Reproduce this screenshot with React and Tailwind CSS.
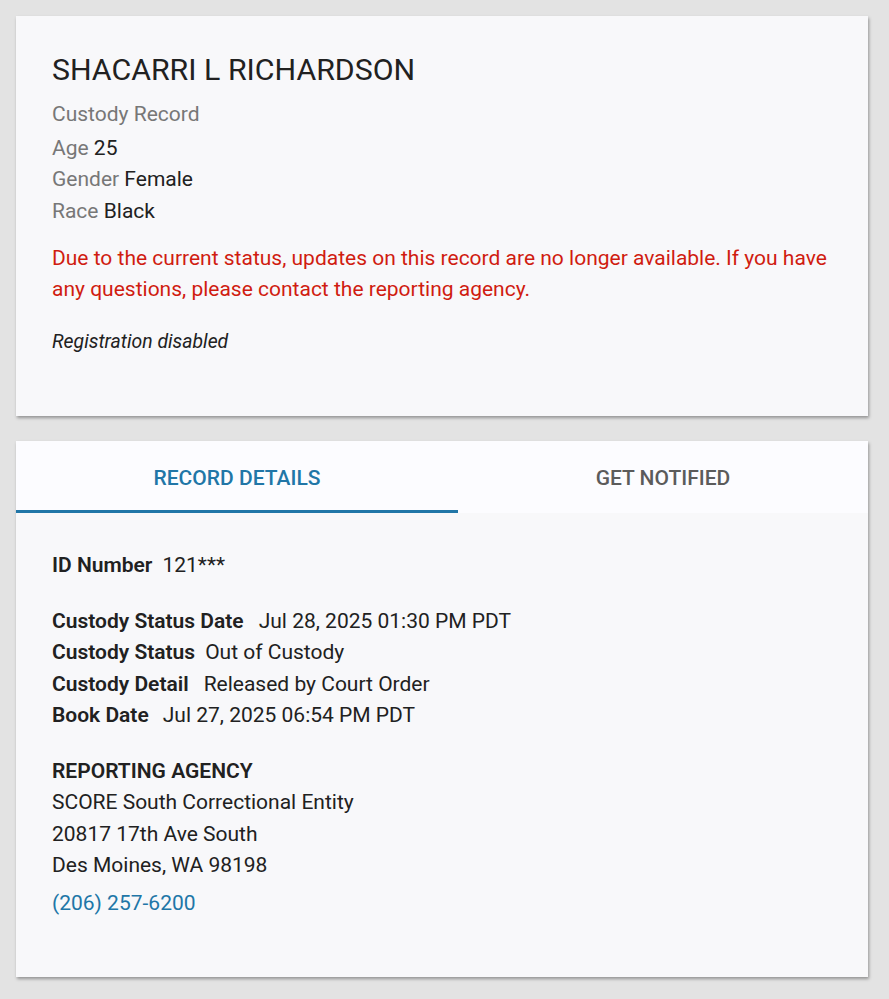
import React, { useState } from 'react';

const Field = ({ label, value, gap = 'ml-[15px]' }) => (
  <div className="leading-[31.5px]">
    <span className="font-semibold">{label}</span>
    <span className={gap}>{value}</span>
  </div>
);

const App = () => {
  const [tab, setTab] = useState('details');

  return (
    <div className="min-h-screen bg-[#e3e3e3] pl-4 pr-[21px] py-4 text-[#212121]" style={{ fontFamily: 'Roboto, "Liberation Sans", sans-serif' }}>
      {/* SUMMARY CARD */}
      <div className="bg-[#f8f8fa] shadow-[1px_2px_3px_rgba(0,0,0,0.35)] px-9 pt-[37px] h-[400px]">
        <h1 className="text-[30.3px] leading-[34px]">SHACARRI L RICHARDSON</h1>
        <div className="mt-[12px] text-[21px] leading-[31.5px]">
          <div className="text-[#777777]">Custody Record</div>
          <div className="mt-[2px]"><span className="text-[#777777]">Age</span> 25</div>
          <div><span className="text-[#777777]">Gender</span> Female</div>
          <div><span className="text-[#777777]">Race</span> Black</div>
        </div>
        <p className="mt-[16px] text-[21px] leading-[31px] text-[#d01c10]">
          Due to the current status, updates on this record are no longer available. If you have any questions, please contact the reporting agency.
        </p>
        <p className="mt-[25px] italic text-[19.4px] leading-[24px]">Registration disabled</p>
      </div>

      {/* DETAILS CARD */}
      <div className="mt-[25px] bg-[#f8f8fa] shadow-[1px_2px_3px_rgba(0,0,0,0.35)] h-[536px]">
        <div className="flex h-[72px] bg-[#fcfcff]">
          <button onClick={() => setTab('details')} className={`w-[442px] h-full pt-[6px] text-[21px] font-medium border-b-[3px] ${tab === 'details' ? 'text-[#2176a7] border-[#2176a7]' : 'text-[#5b5b5b] border-transparent'}`}>
            RECORD DETAILS
          </button>
          <button onClick={() => setTab('notify')} className={`flex-1 h-full pt-[6px] text-[21px] font-medium border-b-[3px] ${tab === 'notify' ? 'text-[#2176a7] border-[#2176a7]' : 'text-[#5b5b5b] border-transparent'}`}>
            GET NOTIFIED
          </button>
        </div>

        <div className="px-9 pt-[37px] text-[21px]">
          <Field label="ID Number" value="121***" gap="ml-[10px]" />
          <div className="mt-[24px]">
            <Field label="Custody Status Date" value="Jul 28, 2025 01:30 PM PDT" gap="ml-[15px]" />
            <Field label="Custody Status" value="Out of Custody" gap="ml-[10px]" />
            <Field label="Custody Detail" value="Released by Court Order" gap="ml-[15px]" />
            <Field label="Book Date" value="Jul 27, 2025 06:54 PM PDT" gap="ml-[14px]" />
          </div>
          <div className="mt-[24px] leading-[31.5px]">
            <div className="font-semibold">REPORTING AGENCY</div>
            <div>SCORE South Correctional Entity</div>
            <div>20817 17th Ave South</div>
            <div>Des Moines, WA 98198</div>
            <a href="#" className="block mt-[6px] text-[#2176a7]">(206) 257-6200</a>
          </div>
        </div>
      </div>
    </div>
  );
};

export default App;
